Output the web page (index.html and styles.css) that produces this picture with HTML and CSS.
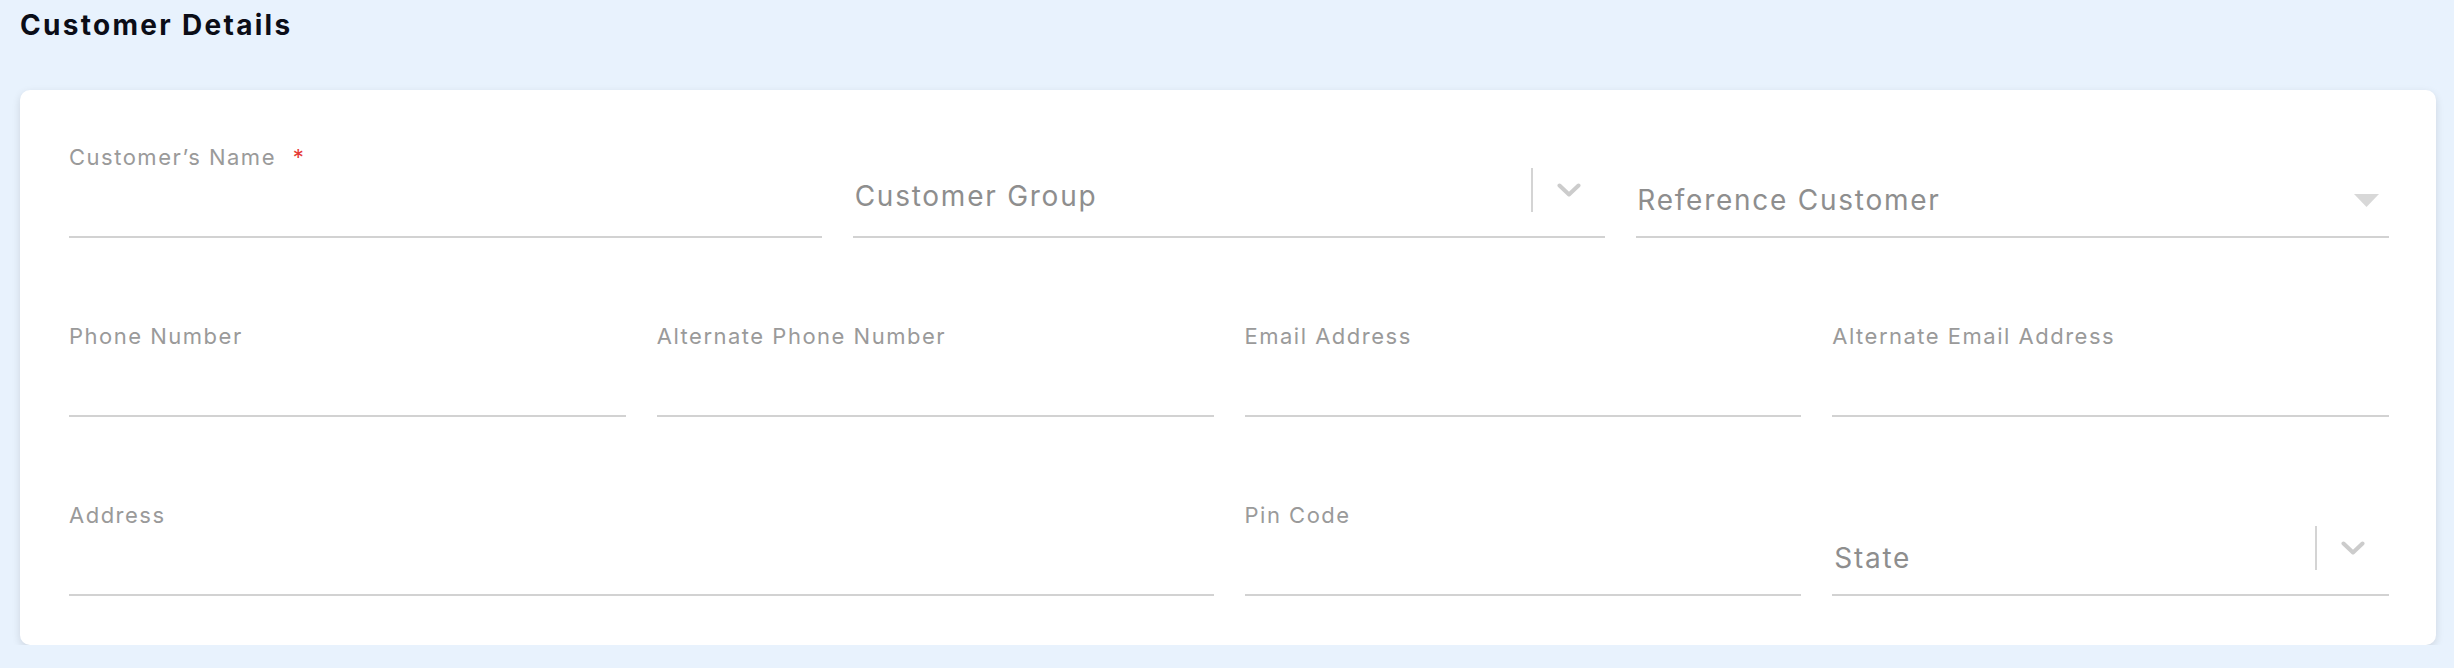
FILE: index.html
```html
<!DOCTYPE html>
<html lang="en">
<head>
    <meta charset="UTF-8">
    <meta name="viewport" content="width=device-width, initial-scale=1.0">
    <title>Customer Details</title>
    <link rel="stylesheet" href="styles.css">
</head>
<body>
    <h2 class="section-title">Customer Details</h2>
    <div class="card">
        <div class="form-grid">
            <div class="field span-4">
                <label for="name">Customer’s Name <span class="required">*</span></label>
                <input type="text" id="name">
            </div>
            <div class="field span-4 select-field">
                <div class="select-control">
                    <div class="select-placeholder">Customer Group</div>
                    <span class="select-separator"></span>
                    <div class="select-indicator">
                        <svg width="24" height="14" viewBox="0 0 24 14"><path d="M2.5 2.5 L12 11.5 L21.5 2.5" fill="none" stroke="#cccccc" stroke-width="4" stroke-linecap="round" stroke-linejoin="round"/></svg>
                    </div>
                </div>
            </div>
            <div class="field span-4 select-field">
                <div class="dropdown-control">
                    <div class="dropdown-placeholder">Reference Customer</div>
                    <svg class="dropdown-arrow" width="25" height="13" viewBox="0 0 25 13"><polygon points="0,0 25,0 12.5,13" fill="#d8d8d8"/></svg>
                </div>
            </div>

            <div class="field span-3">
                <label for="phone">Phone Number</label>
                <input type="text" id="phone">
            </div>
            <div class="field span-3">
                <label for="alt-phone">Alternate Phone Number</label>
                <input type="text" id="alt-phone">
            </div>
            <div class="field span-3">
                <label for="email">Email Address</label>
                <input type="text" id="email">
            </div>
            <div class="field span-3">
                <label for="alt-email">Alternate Email Address</label>
                <input type="text" id="alt-email">
            </div>

            <div class="field span-6">
                <label for="address">Address</label>
                <input type="text" id="address">
            </div>
            <div class="field span-3">
                <label for="pin">Pin Code</label>
                <input type="text" id="pin">
            </div>
            <div class="field span-3 select-field">
                <div class="select-control">
                    <div class="select-placeholder state">State</div>
                    <span class="select-separator"></span>
                    <div class="select-indicator">
                        <svg width="24" height="14" viewBox="0 0 24 14"><path d="M2.5 2.5 L12 11.5 L21.5 2.5" fill="none" stroke="#cccccc" stroke-width="4" stroke-linecap="round" stroke-linejoin="round"/></svg>
                    </div>
                </div>
            </div>
        </div>
    </div>
</body>
</html>
```

FILE: styles.css
```css
body {
    margin: 0;
    padding: 8px 0 0;
    background: #e8f2fd;
    font-family: "Inter", "Open Sans", sans-serif;
}
.section-title {
    margin: 0 20px;
    font-size: 28px;
    line-height: 34px;
    font-weight: 700;
    letter-spacing: 2.3px;
    color: #0b0d17;
}
.card {
    margin: 48px 18px 0 20px;
    background: #fff;
    border-radius: 10px;
    padding: 54px 47px 49px 49px;
    box-shadow: 0 3px 9px rgba(0, 0, 0, 0.12);
}
.form-grid {
    display: grid;
    grid-template-columns: repeat(12, 1fr);
    column-gap: 31px;
    row-gap: 85px;
}
.span-3 { grid-column: span 3; }
.span-4 { grid-column: span 4; }
.span-6 { grid-column: span 6; }
.field {
    display: flex;
    flex-direction: column;
    height: 94px;
}
.field label {
    font-size: 22px;
    line-height: 26px;
    letter-spacing: 1.5px;
    color: #9a9a9a;
}
.required {
    color: #e53935;
    margin-left: 9px;
}
.field input {
    flex: 1;
    border: none;
    border-bottom: 2px solid #d2d2d2;
    background: transparent;
    outline: none;
    padding: 0;
    font: inherit;
}
.select-field {
    justify-content: flex-end;
}
.select-control {
    display: flex;
    align-items: center;
    height: 60px;
    padding-bottom: 16px;
    border-bottom: 2px solid #d2d2d2;
}
.select-placeholder {
    flex: 1;
    padding: 12px 0 0 2px;
    font-size: 28px;
    letter-spacing: 1.75px;
    color: #8e8e8e;
}
.select-placeholder.state {
    padding: 20px 0 0 2px;
}
.select-separator {
    align-self: stretch;
    width: 2px;
    margin: 8px 0;
    background: #d4d4d4;
}
.select-indicator {
    display: flex;
    padding: 0 24px;
}
.dropdown-control {
    display: flex;
    align-items: center;
    height: 44px;
    padding: 0 10px 14px 0;
    border-bottom: 2px solid #d2d2d2;
}
.dropdown-placeholder {
    flex: 1;
    padding-left: 1px;
    font-size: 28px;
    letter-spacing: 1.75px;
    color: #8e8e8e;
}
```
